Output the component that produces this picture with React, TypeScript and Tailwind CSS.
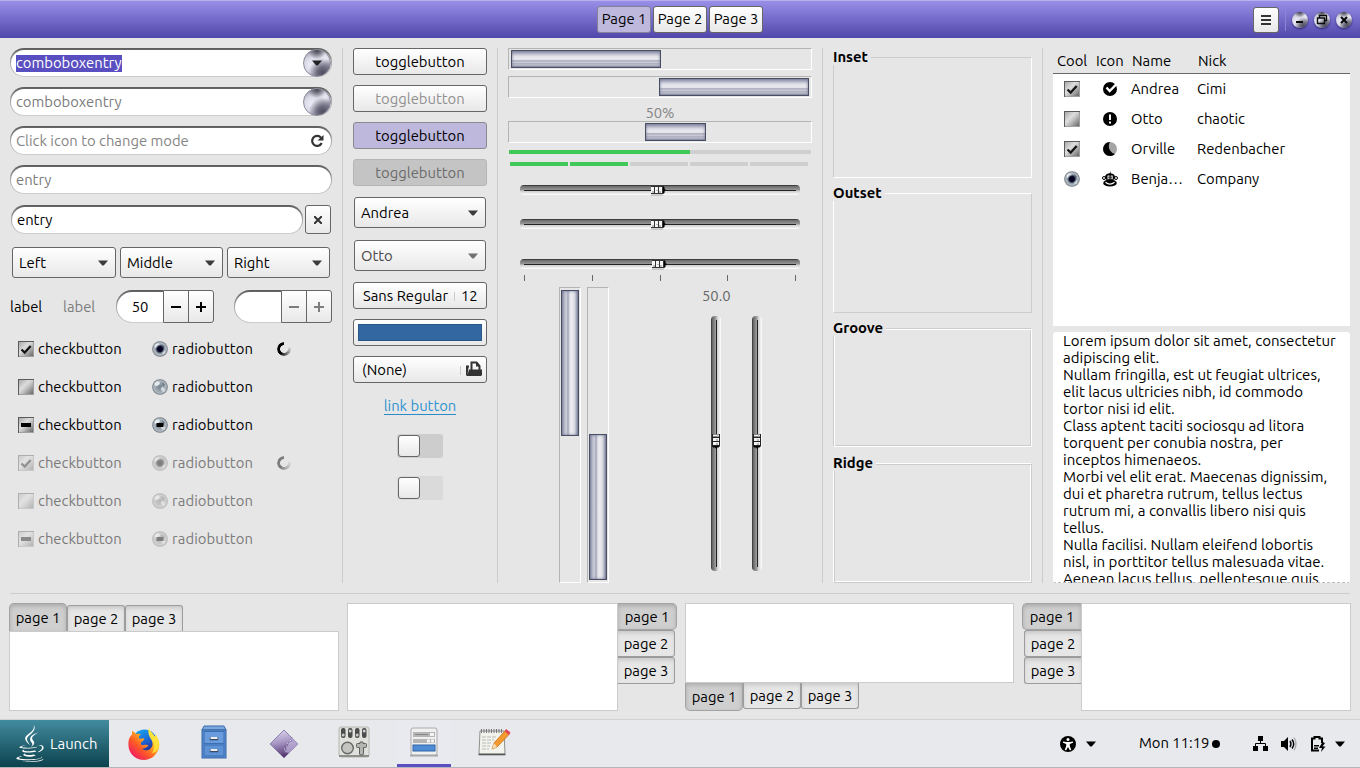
import type { ReactNode } from "react";
import { FaJava } from "react-icons/fa";

const ORB =
  "rounded-full bg-[radial-gradient(circle_at_50%_-2%,#3c3c48_0%,transparent_32%),radial-gradient(circle_at_72%_88%,#4e4e60_0%,#6a6a7c_18%,transparent_48%),radial-gradient(circle_at_82%_32%,#ececf6_0%,transparent_34%),radial-gradient(circle_at_30%_58%,#eeeef8_0%,#dcdcea_28%,transparent_60%),linear-gradient(135deg,#8e8e9e,#c2c2d0_50%,#7c7c90)]";

function Caret({ className = "" }: { className?: string }) {
  return (
    <svg className={className} width="10" height="6" viewBox="0 0 10 6">
      <path d="M0 .5h10L6 5.2Q5 6 4 5.2Z" fill="currentColor" />
    </svg>
  );
}

function Button({ className = "", children }: { className?: string; children?: ReactNode }) {
  return (
    <div
      className={`flex items-center rounded-[3px] border border-[#666] bg-linear-to-b from-white to-[#e8e8e8] ${className}`}
    >
      {children}
    </div>
  );
}

function Entry({ className = "", children }: { className?: string; children?: ReactNode }) {
  return (
    <div
      className={`flex h-[29px] rounded-[14px] bg-linear-to-b from-[#5d5d5d] via-[#a8a8a8] to-[#cecece] px-px pt-[2px] pb-px ${className}`}
    >
      <div className="flex min-w-0 flex-1 items-center justify-between rounded-[13px] bg-white pl-[5px]">{children}</div>
    </div>
  );
}

function Combo({ label, className = "", off = false }: { label: string; className?: string; off?: boolean }) {
  return (
    <Button className={`h-[31px] justify-between pr-[7px] pl-[6px] ${className}`}>
      <span className={`pt-px ${off ? "text-[#484848]" : ""}`}>{label}</span>
      <Caret className={off ? "text-[#707070]" : "text-[#3c3c3c]"} />
    </Button>
  );
}

type State = "on" | "off" | "mixed";

function Check({ state, off = false }: { state: State; off?: boolean }) {
  return (
    <svg width="16" height="16" viewBox="0 0 16 16" className={`shrink-0 ${off ? "opacity-40" : ""}`}>
      <defs>
        <linearGradient id="chk" x1="0" y1="0" x2="1" y2="1">
          <stop offset="0" stopColor="#a8a8a8" />
          <stop offset=".4" stopColor="#dedede" />
          <stop offset=".6" stopColor="#bcbcbc" />
          <stop offset="1" stopColor="#666" />
        </linearGradient>
      </defs>
      <rect width="16" height="16" fill="#a0a0a0" />
      <path d="M0 0h16v1H1v15H0z" fill="#5b5b5b" />
      <rect x="1" y="1" width="14" height="14" fill="url(#chk)" />
      {state === "on" && <path d="M3.500 8.500l3.200 3 6-6.500" fill="none" stroke="#161616" strokeWidth="2.300" />}
      {state === "mixed" && <rect x="3" y="6" width="10" height="4" fill="#000" />}
    </svg>
  );
}

function Radio({ state, off = false }: { state: State; off?: boolean }) {
  return (
    <svg width="16" height="16" viewBox="0 0 16 16" className={`shrink-0 ${off ? "opacity-45 grayscale" : ""}`}>
      <defs>
        <radialGradient id="rad" cx=".5" cy=".5" r=".5">
          <stop offset="0" stopColor="#76818d" />
          <stop offset=".45" stopColor="#929ea9" />
          <stop offset=".8" stopColor="#b0b9c0" />
          <stop offset="1" stopColor="#636b73" />
        </radialGradient>
        <radialGradient id="pupil">
          <stop offset="0" stopColor="#00000c" />
          <stop offset=".55" stopColor="#0b0b2e" />
          <stop offset="1" stopColor="#4a5666" stopOpacity="0" />
        </radialGradient>
        <filter id="soft"><feGaussianBlur stdDeviation=".7" /></filter>
      </defs>
      <circle cx="8" cy="8" r="7.800" fill="url(#rad)" />
      <g filter="url(#soft)">
        <ellipse cx="5.200" cy="4.600" rx="2.800" ry="2" fill="#e6ebef" transform="rotate(-30 5.200 4.600)" />
        <ellipse cx="11" cy="10.500" rx="1.800" ry="2.600" fill="#d2d9de" transform="rotate(-40 11 10.500)" />
        <path d="M10 3l3 2.500-2 2z" fill="#6b7886" />
      </g>
      {state === "on" && <circle cx="8" cy="8" r="5" fill="url(#pupil)" />}
      {state === "mixed" && <rect x="4.500" y="6" width="7" height="4" rx=".6" fill="#000" />}
    </svg>
  );
}

function Spinner({ off = false }: { off?: boolean }) {
  return (
    <div
      className={`size-[14px] rounded-full bg-[conic-gradient(transparent_0deg,transparent_65deg,#ccc_85deg,#777_150deg,#000_220deg,#000_360deg)] mask-[radial-gradient(circle,transparent_3.6px,black_4.2px)] ${off ? "opacity-45" : ""}`}
    />
  );
}

function ChoiceRow({ state, off = false, spin = false }: { state: State; off?: boolean; spin?: boolean }) {
  return (
    <div className={`flex h-[38px] items-center pl-2 ${off ? "text-[#7b7b7b]" : ""}`}>
      <div className="flex w-[134px] items-center gap-1">
        <Check state={state} off={off} />
        <span>checkbutton</span>
      </div>
      <div className="flex w-[125px] items-center gap-1">
        <Radio state={state} off={off} />
        <span className="tracking-[0.1px]">radiobutton</span>
      </div>
      {spin && <Spinner off={off} />}
    </div>
  );
}

function Spin({ value, off = false }: { value: string; off?: boolean }) {
  return (
    <div className={`flex h-[33px] w-[98px] ${off ? "text-[#7d7d7d]" : ""}`}>
      <div className="flex w-[47px] rounded-l-[16px] bg-linear-to-b from-[#5d5d5d] via-[#a8a8a8] to-[#cecece] pt-[2px] pb-px pl-px">
        <div className="flex flex-1 items-center justify-center rounded-l-[15px] bg-white">{value}</div>
      </div>
      <div className="flex w-[51px] rounded-r-[3px] border border-[#666] bg-linear-to-b from-white to-[#e8e8e8]">
        <div className="flex w-[25px] items-center justify-center border-r border-[#666]">
          <div className="h-[2px] w-[10px] bg-current" />
        </div>
        <div className="flex flex-1 items-center justify-center">
          <svg width="10" height="10"><path d="M0 5h10M5 0v10" stroke="currentColor" strokeWidth="2" /></svg>
        </div>
      </div>
    </div>
  );
}

const THUMB = "border border-[#4a4e62] shadow-[inset_0_0_3px_#70748e]";
const THUMB_H = `${THUMB} bg-[linear-gradient(180deg,#8f92ab_0%,#b9bacb_18%,#e0e0e8_32%,#e9e9ee_50%,#dedee8_55%,#aeb0c1_60%,#bfc1cf_70%,#cfd0da_73%,#abadbf_79%,#c3c5d1_88%,#8f92aa_100%)]`;
const THUMB_V = `${THUMB} bg-[linear-gradient(90deg,#9094ab_0%,#bfc1cf_18%,#c9cad8_28%,#a9abbe_36%,#b5b6c8_42%,#e0e0e8_48%,#ececf1_58%,#dfdfe6_75%,#b6b8c8_88%,#8083a0_100%)]`;
const WELL = "flex shrink-0 border border-t-[#b4b4b4] border-l-[#b4b4b4] border-r-white border-b-white";

function Trough({ vertical = false, shift = 0 }: { vertical?: boolean; shift?: number }) {
  return (
    <svg
      width={vertical ? 12 : 280}
      height={vertical ? 255 : 12}
      viewBox={vertical ? "0 0 12 255" : "0 0 280 12"}
      className="block shrink-0"
    >
      <defs>
        <linearGradient id="gh" x1="0" y1="0" x2="0" y2="1">
          <stop offset="0" stopColor="#1d1d1d" />
          <stop offset=".12" stopColor="#6c6c6c" />
          <stop offset=".5" stopColor="#999" />
          <stop offset=".62" stopColor="#d0d0d0" />
          <stop offset=".88" stopColor="#efefef" />
          <stop offset="1" stopColor="#fff" />
        </linearGradient>
        <linearGradient id="gv" x1="0" y1="0" x2="1" y2="0">
          <stop offset="0" stopColor="#2d2d2d" />
          <stop offset=".12" stopColor="#656565" />
          <stop offset=".5" stopColor="#a3a3a3" />
          <stop offset=".62" stopColor="#d0d0d0" />
          <stop offset="1" stopColor="#fff" />
        </linearGradient>
      </defs>
      {vertical ? (
        <>
          <rect width="10" height="255" rx="4" fill="url(#gv)" />
          <path d="M5.500 4v247" stroke="#222" />
          <g transform="translate(1 118)">
            <rect width="8" height="12" fill="#222" />
            <path d="M1 .5h6v2H1zM1 4h6v3H1zM1 8h6v3H1z" fill="#f2f2f2" />
            <path d="M5 .5h1v2H5zM4 5h2v2H4zM4 9h2v2H4z" fill="#bbb" />
            <path d="M0 12h8L6.500 13.500H5L4 15l-1-1.500H1z" fill="#000" />
          </g>
        </>
      ) : (
        <>
          <rect width="280" height="10" rx="4" fill="url(#gh)" />
          <path d="M4 5.500h272" stroke="#222" />
          <g transform={`translate(${131 + shift} 1)`}>
            <rect width="12" height="8" fill="#333" />
            <path d="M0 1h3v6H0zM4 1h3v6H4zM8 1h3v6H8z" fill="#f5f5f5" />
            <path d="M1 5h2v2H1zM5 4h2v1H5zM8 5h2v2H8z" fill="#bbb" />
            <path d="M12 0l1.500 1v2L15 4l-1.500 1.500V7L12 8z" fill="#000" />
            <path d="M0 9h12" stroke="#aaa" />
          </g>
        </>
      )}
    </svg>
  );
}

function Frame({ title, className }: { title: string; className: string }) {
  return (
    <div className={`flex shrink-0 items-start ${className}`}>
      <span className="-mt-[9px] -ml-px bg-[#e6e6e6] pr-[3px] leading-4 font-bold">{title}</span>
    </div>
  );
}

const TAB_ON = "border-[#a3a3a3] bg-[#cfcfcf] shadow-[inset_0_2px_4px_#aaa]";
const TAB_OFF = "border-[#9c9c9c] bg-[#e6e6e6] shadow-[inset_0_3px_4px_-1px_#c6c6c6]";

function Tab({ n, className }: { n: number; className: string }) {
  return (
    <div className={`flex items-center justify-center pt-px whitespace-nowrap ${n === 1 ? TAB_ON : TAB_OFF} ${className}`}>
      page {n}
    </div>
  );
}

const PAGE = "border border-[#cbcbcb] bg-white";

const LOREM = [
  "Lorem ipsum dolor sit amet, consectetur",
  "adipiscing elit.",
  "Nullam fringilla, est ut feugiat ultrices,",
  "elit lacus ultricies nibh, id commodo",
  "tortor nisi id elit.",
  "Class aptent taciti sociosqu ad litora",
  "torquent per conubia nostra, per",
  "inceptos himenaeos.",
  "Morbi vel elit erat. Maecenas dignissim,",
  "dui et pharetra rutrum, tellus lectus",
  "rutrum mi, a convallis libero nisi quis",
  "tellus.",
  "Nulla facilisi. Nullam eleifend lobortis",
  "nisl, in porttitor tellus malesuada vitae.",
  "Aenean lacus tellus, pellentesque quis",
];

function RowIcon({ kind }: { kind: string }) {
  return (
    <svg width="16" height="16" viewBox="0 0 16 16">
      {kind === "check" && (
        <>
          <circle cx="8" cy="8" r="7" fill="#000" />
          <path d="M4.500 6.500l3.200 3.500L16 1.500" fill="none" stroke="#fff" strokeWidth="2.400" />
        </>
      )}
      {kind === "alert" && (
        <>
          <circle cx="8" cy="8" r="7" fill="#000" />
          <path d="M7 3.500h2v5.500H7zM7 10.500h2v2H7z" fill="#fff" />
        </>
      )}
      {kind === "moon" && (
        <>
          <circle cx="8" cy="8" r="7" fill="#a5a5a5" />
          <path d="M8 1a7 7 0 1 0 5 12C8 11.500 5 6 8 1z" fill="#000" />
        </>
      )}
      {kind === "monkey" && (
        <>
          <path d="M9 0L7.500 2.200C4.500 2.500 3 4 3 6.300c0 1 .4 1.800 1 2.400h8c.600-.600 1-1.400 1-2.400 0-2.300-1.500-3.800-4.500-4.100L8.600 1.600z" fill="#000" />
          <circle cx="2" cy="7" r="1.500" fill="none" stroke="#000" />
          <circle cx="14" cy="7" r="1.500" fill="none" stroke="#000" />
          <path d="M5.500 4.500h2v3.500h-2zM8.700 4.500h2v3.500h-2z" fill="#fff" />
          <path d="M6.500 5.500h1v2h-1zM8.700 5.500h1v2h-1z" fill="#000" />
          <ellipse cx="8" cy="12" rx="6.800" ry="3.600" fill="#000" />
          <path d="M3.500 11.300q4.500 3.500 9 0" fill="none" stroke="#fff" strokeWidth="1.200" />
        </>
      )}
    </svg>
  );
}

function WindowOrb({ children }: { children: ReactNode }) {
  return (
    <div className={`flex size-[16px] items-center justify-center shadow-[0_1px_2px_#2d2670] ${ORB}`}>
      <svg width="16" height="16" viewBox="0 0 16 16" fill="none" stroke="#0a0a0a">{children}</svg>
    </div>
  );
}

function Firefox() {
  return (
    <svg width="34" height="34" viewBox="0 0 34 34">
      <defs>
        <linearGradient id="fx" x1=".85" y1=".1" x2=".15" y2=".9">
          <stop offset="0" stopColor="#fff14a" />
          <stop offset=".35" stopColor="#ffb21e" />
          <stop offset=".65" stopColor="#ff5a26" />
          <stop offset="1" stopColor="#ee1b63" />
        </linearGradient>
        <linearGradient id="fxb" x1="0" y1="0" x2=".5" y2="1">
          <stop offset="0" stopColor="#18b4f5" />
          <stop offset=".6" stopColor="#1b62d4" />
          <stop offset="1" stopColor="#2b2a86" />
        </linearGradient>
      </defs>
      <circle cx="17.500" cy="15" r="12.500" fill="url(#fxb)" />
      <path d="M22 1c1 4 4 5 6 9l1-2c3 4 4 9 3 13-2 7-8 12-15 12C9 33 2 27 1.500 19 1 14 2 10 5 7.500L5 4c2 .5 3 2 4 3 2-.5 4-.3 5 .5-2 1-2.500 2.500-2 4h5c1 1-1 2.500-3 4-.5 2 .5 3 3 2.500 2-.5 4 0 4.500 1-2 .5-3 3-6.500 2.500 4 4 10 1 10.500-4C26 11 20 9 22 1z" fill="url(#fx)" />
      <path d="M22 1c1 4 4 5 6 9l1-2c2.500 4 3.500 8 2.500 12-1 3.500-4 6-6.500 6 3-4 3-9 0-12.500C22.500 10 20.500 7 22 1z" fill="#ffe63c" opacity=".85" />
    </svg>
  );
}

function Drawer() {
  return (
    <svg width="26" height="34" viewBox="0 0 26 34">
      <path d="M3 1h20l2 4H1z" fill="#7ba7dc" stroke="#3b6cab" />
      <rect x="1" y="5" width="24" height="28" fill="#5a90d6" stroke="#3667a5" />
      <rect x="3" y="6.500" width="20" height="12" fill="#6a9cdd" stroke="#3c6fb0" />
      <rect x="3" y="20" width="20" height="11" fill="#5d92d6" stroke="#3c6fb0" />
      <path d="M9.500 12v2.500h7V12M9.500 24v2.500h7V24" fill="none" stroke="#334a66" strokeWidth="1.400" />
      <path d="M9.500 12h7v2h-7zM9.500 24h7v2h-7z" fill="#eee" />
    </svg>
  );
}

function Diamond() {
  return (
    <svg width="30" height="30" viewBox="0 0 30 30">
      <defs>
        <linearGradient id="dm" x1="0" y1="0" x2=".2" y2="1">
          <stop offset="0" stopColor="#e4dcf2" />
          <stop offset=".5" stopColor="#a796c4" />
          <stop offset="1" stopColor="#563470" />
        </linearGradient>
      </defs>
      <path d="M15 1l14 14-14 14L1 15z" fill="url(#dm)" stroke="#8d80a8" />
      <path d="M24 10l5 5-9 9-5-1 0-4 4-2 1-4 2-1z" fill="#c0b4dc" opacity=".7" />
      <path d="M24 9l-2 1 0 3-3 1-1 2-2 1 1 3-2 3-3 0-1 2" fill="none" stroke="#6f5c90" />
      <path d="M23.500 9.500l-2 1 0 3-3 1-1 2" fill="none" stroke="#ddd4ee" strokeDasharray="1.500 1" />
    </svg>
  );
}

function Tweaks() {
  return (
    <svg width="32" height="32" viewBox="0 0 32 32">
      <rect x="1" y="1" width="30" height="30" rx="2" fill="#e0e1dc" stroke="#b5b6b1" />
      <path d="M1 30h30" stroke="#8e8f8b" strokeWidth="2" />
      {[3, 10, 17, 24].map((x, i) => (
        <g key={x}>
          <rect x={x} y="2" width="4.500" height="10" rx="2" fill="#4a4d4b" />
          <circle cx={x + 2.2} cy={i % 2 ? 5 : 9} r="1.500" fill="#ccc" />
        </g>
      ))}
      <circle cx="9.500" cy="22" r="5.800" fill="#c4c5c1" stroke="#666965" strokeWidth="1.400" />
      <path d="M18.500 18.500q0-1 1-1H22v-1.500h3v1.500h2.500q1 0 1 1v2q0 1-1 1h-2V28q0 1-2 1t-2-1v-6.500h-2q-1 0-1-1z" fill="#b4b6b2" stroke="#5d605d" />
    </svg>
  );
}

function WidgetApp() {
  return (
    <svg width="30" height="30" viewBox="0 0 30 30">
      <path d="M1 28.500h28" stroke="#777" strokeWidth="2" opacity=".6" />
      <rect x="2" y="1" width="26" height="27" rx="2" fill="#f0f0f0" stroke="#a9a9a9" />
      <rect x="4" y="5" width="22" height="5" fill="#b5b5b5" />
      <rect x="6" y="7" width="13" height="1" fill="#888" />
      <path d="M21 6h4v3h-4z" fill="#f4f4f4" />
      <rect x="4" y="12" width="22" height="4" fill="#b5b5b5" />
      <path d="M18 12.500h3v3h-3zM22 12.500h3v3h-3z" fill="#f4f4f4" />
      <rect x="4" y="18" width="22" height="6" fill="#4f8cd6" stroke="#2d62a8" />
    </svg>
  );
}

function Notepad() {
  return (
    <svg width="34" height="30" viewBox="0 0 34 30">
      <path d="M3 4h24l1 23H2z" fill="#f3f3ee" stroke="#8f908c" />
      <path d="M1.500 27.500h27" stroke="#555" strokeWidth="1.600" />
      <path d="M4 4h22" stroke="#777" strokeWidth="4" strokeDasharray="1 1.500" />
      <path d="M5 10h14M5 13h12M5 16h9M5 19h8M5 22h7" stroke="#b9b9b5" strokeDasharray="4 1" />
      <path d="M15 22l2-6L28 4l4 3.500L20 20z" fill="#f59a2e" stroke="#c46d12" strokeWidth=".8" />
      <path d="M17 16l3 4-5 2z" fill="#f5dfb5" />
      <path d="M28 4l1-1.500 4 3L32 7.500z" fill="#e3485a" stroke="#e3485a" />
    </svg>
  );
}

export default function App() {
  return (
    <div className="flex h-[768px] w-[1360px] flex-col overflow-hidden bg-[#e6e6e6] font-['Ubuntu','Noto_Sans',sans-serif] text-[14.8px] leading-none whitespace-nowrap text-black">
      <header className="grid h-[38px] shrink-0 grid-cols-[1fr_auto_1fr] items-center border-t border-[#b8b0ec] bg-linear-to-b from-[#998fe8] to-[#5146aa]">
        <div />
        <div className="flex gap-[2px]">
          <div className="flex h-[27px] w-[54px] items-center justify-center rounded-[3px] border border-[#85829c] bg-[#bdb8dc]">Page 1</div>
          <Button className="h-[27px] w-[54px] justify-center">Page 2</Button>
          <Button className="h-[27px] w-[54px] justify-center">Page 3</Button>
        </div>
        <div className="flex items-center justify-end pr-[8px]">
          <Button className="size-[26px] justify-center">
            <svg width="10" height="10"><path d="M0 1h10M0 5h10M0 9h10" stroke="#333" strokeWidth="2" /></svg>
          </Button>
          <div className="mr-[6px] ml-[6px] h-[22px] w-px bg-[#8d84d6]" />
          <div className="flex gap-[6px]">
            <WindowOrb><path d="M4 10h7" strokeWidth="2" /></WindowOrb>
            <WindowOrb><path d="M5.500 6V3.500h7v5H11M3.500 6h7v5.500h-7z" strokeWidth="1.400" /></WindowOrb>
            <WindowOrb><path d="M5 5l6 6M11 5l-6 6" strokeWidth="2" /></WindowOrb>
          </div>
        </div>
      </header>

      <main className="flex h-[545px] shrink-0 gap-[10px] px-[10px] pt-[10px]">
        <section className="flex w-[322px] flex-col">
          <div className="flex flex-col gap-[10px]">
            <Entry>
              <span className="bg-[#5a4fc0] pb-[2px] leading-[15px] text-white">comboboxentry</span>
              <div className={`flex size-[28px] items-center justify-center border border-[#8c8c9c] ${ORB}`}>
                <Caret className="text-[#222]" />
              </div>
            </Entry>
            <Entry className="text-[#7b7b7b]">
              comboboxentry
              <div className={`size-[28px] border border-[#8c8c9c] ${ORB}`} />
            </Entry>
            <Entry className="text-[#858585]">
              Click icon to change mode
              <svg className="mr-[7px]" width="14" height="14" viewBox="0 0 14 14">
                <path d="M11 3.700A5 5 0 1 0 11.700 9" fill="none" stroke="#333" strokeWidth="2.200" />
                <path d="M13.500 1v5.500H7.500z" fill="#333" />
              </svg>
            </Entry>
            <Entry className="text-[#7b7b7b]">entry</Entry>
          </div>
          <div className="mt-[11px] flex gap-[2px] pl-px">
            <Entry className="w-[292px]">entry</Entry>
            <Button className="h-[29px] w-[26px] justify-center">
              <svg width="8" height="8"><path d="M0 0l8 8M8 0L0 8" stroke="#333" strokeWidth="2" /></svg>
            </Button>
          </div>
          <div className="mt-[13px] flex gap-[4px] pl-[2px]">
            <Combo label="Left" className="w-[104px]" />
            <Combo label="Middle" className="w-[103px]" />
            <Combo label="Right" className="w-[103px]" />
          </div>
          <div className="mt-[12px] flex items-center">
            <span className="w-[53px] pt-px">label</span>
            <span className="w-[53px] pt-px text-[#7b7b7b]">label</span>
            <Spin value="50" />
            <div className="w-[20px]" />
            <Spin value="" off />
          </div>
          <div className="mt-[7px] flex flex-col">
            <ChoiceRow state="on" spin />
            <ChoiceRow state="off" />
            <ChoiceRow state="mixed" />
            <ChoiceRow state="on" off spin />
            <ChoiceRow state="off" off />
            <ChoiceRow state="mixed" off />
          </div>
        </section>
        <div className="w-px bg-[#cccccc]" />

        <section className="flex w-[134px] flex-col items-center">
          <div className="flex w-full flex-col gap-[10px]">
            <Button className="h-[27px] justify-center pt-px">togglebutton</Button>
            <Button className="h-[27px] justify-center pt-px text-[#909090]">togglebutton</Button>
            <div className="flex h-[27px] items-center justify-center rounded-[3px] border border-[#8a8a90] bg-[#bdb8dc] pt-px">togglebutton</div>
            <div className="flex h-[27px] items-center justify-center rounded-[3px] border border-[#b5b5b5] bg-[#c4c4c4] pt-px text-[#6b6b6b]">togglebutton</div>
          </div>
          <Combo label="Andrea" className="mt-[11px] w-[132px]" />
          <Combo label="Otto" off className="mt-[12px] w-[132px]" />
          <Button className="mt-[11px] h-[27px] w-full pt-px pl-[9px]">
            <span className="w-[91px]">Sans Regular</span>
            <div className="h-[9px] w-px bg-[#ccc]" />
            <span className="ml-[6px]">12</span>
          </Button>
          <Button className="mt-[10px] h-[27px] w-full justify-center">
            <div className="h-[17px] w-[124px] border border-[#29578a] bg-[#3267a1]" />
          </Button>
          <Button className="mt-[10px] h-[27px] w-full pt-px pl-[8px]">
            <span className="w-[98px]">(None)</span>
            <div className="h-[9px] w-px bg-[#ccc]" />
            <svg className="mt-[-3px] ml-[5px]" width="16" height="16" viewBox="0 0 16 16">
              <path d="M5.500 9V1.500h5L13.500 5v4" fill="none" stroke="#333" strokeWidth="2" />
              <path d="M0 4.500h3v2H2.500L1.500 14 3 8.500h13V14l-1 1H1l-1-1z" fill="#333" />
              <path d="M10 1h1l3 3.500v1h-4z" fill="#333" />
            </svg>
          </Button>
          <div className="mt-[15px] flex h-[17px] items-center border-b border-[#2a8bc8] pt-px text-[#2f93d0]">link button</div>
          <div className="mt-[19px] flex h-[24px] w-[46px] items-center rounded-[3px] bg-[#cdcdcd] pl-px">
            <Button className="h-[22px] w-[22px]" />
          </div>
          <div className="mt-[18px] flex h-[24px] w-[46px] items-center rounded-[3px] bg-[#dadada] pl-px">
            <Button className="h-[22px] w-[22px]" />
          </div>
        </section>
        <div className="w-px bg-[#cccccc]" />

        <section className="flex w-[304px] flex-col">
          <div className={`h-[22px] pt-px pl-[2px] ${WELL}`}><div className={`h-[18px] w-[150px] ${THUMB_H}`} /></div>
          <div className={`mt-[6px] h-[22px] justify-end pt-px pr-[2px] ${WELL}`}><div className={`h-[18px] w-[150px] ${THUMB_H}`} /></div>
          <div className="flex h-[23px] shrink-0 items-center justify-center pt-[7px] text-[#858585]">50%</div>
          <div className={`h-[22px] pt-px pl-[136px] ${WELL}`}><div className={`h-[18px] w-[61px] ${THUMB_H}`} /></div>
          <div className="mt-[7px] ml-px flex h-[4px] w-[302px] shrink-0 bg-[#cfcfcf]"><div className="w-[181px] bg-[#40c958]" /></div>
          <div className="mt-[8px] ml-[2px] flex h-[4px] shrink-0 gap-[2px]">
            <div className="w-[58px] bg-[#40c958]" />
            <div className="w-[58px] bg-[#40c958]" />
            <div className="w-[58px] bg-[#cfcfcf]" />
            <div className="w-[58px] bg-[#cfcfcf]" />
            <div className="w-[58px] bg-[#cfcfcf]" />
          </div>
          <div className="mt-[19px] flex shrink-0 flex-col pl-[12px]">
            <Trough />
            <div className="h-[22px]" />
            <Trough />
            <div className="h-[28px]" />
            <Trough shift={1} />
          </div>
          <div className="mt-[4px] ml-[16px] flex h-[6px] w-[272px] shrink-0 justify-between">
            {[0, 1, 2, 3, 4].map((i) => <div key={i} className="w-px bg-[#666]" />)}
          </div>
          <div className="mt-[6px] flex pl-[51px]">
            <div className={`h-[296px] w-[22px] pt-[2px] pl-px ${WELL}`}><div className={`h-[146px] w-[18px] ${THUMB_V}`} /></div>
            <div className={`ml-[6px] h-[296px] w-[22px] items-end pb-[2px] pl-px ${WELL}`}><div className={`h-[146px] w-[18px] ${THUMB_V}`} /></div>
            <div className="ml-[93px] flex w-[70px] flex-col">
              <div className="h-[29px] pt-[2px] text-[#666]">50.0</div>
              <div className="flex gap-[29px] pl-[9px]">
                <Trough vertical />
                <Trough vertical />
              </div>
            </div>
          </div>
        </section>
        <div className="w-px bg-[#cccccc]" />

        <section className="flex w-[199px] flex-col pt-[9px]">
          <Frame title="Inset" className="h-[121px] border border-t-[#ccc] border-l-[#ccc] border-r-white border-b-white" />
          <Frame title="Outset" className="mt-[15px] h-[120px] border border-t-white border-l-white border-r-[#ccc] border-b-[#ccc]" />
          <Frame title="Groove" className="mt-[15px] h-[119px] border border-t-[#ccc] border-l-[#ccc] border-r-white border-b-white shadow-[inset_1px_1px_#fff,inset_-1px_-1px_#ccc]" />
          <Frame title="Ridge" className="mt-[16px] h-[120px] border border-t-white border-l-white border-r-[#ccc] border-b-[#ccc] shadow-[inset_1px_1px_#ccc,inset_-1px_-1px_#fff]" />
        </section>
        <div className="w-px bg-[#cccccc]" />

        <section className="flex w-[297px] flex-col">
          <div className="flex h-[278px] shrink-0 flex-col bg-white">
            <div className="grid h-[26px] grid-cols-[39px_36px_66px_auto] items-center border-b border-[#666] bg-[#e6e6e6] pt-px pl-[4px]">
              <span>Cool</span><span>Icon</span><span>Name</span><span>Nick</span>
            </div>
            {[
              ["on", "check", "Andrea", "Cimi"],
              ["off", "alert", "Otto", "chaotic"],
              ["on", "moon", "Orville", "Redenbacher"],
              ["radio", "monkey", "Benja…", "Company"],
            ].map(([state, icon, name, nick]) => (
              <div key={name} className="grid h-[30px] grid-cols-[38px_29px_66px_auto] items-center pl-[11px]">
                {state === "radio" ? <Radio state="on" /> : <Check state={state as State} />}
                <RowIcon kind={icon} />
                <span>{name}</span>
                <span>{nick}</span>
              </div>
            ))}
          </div>
          <div className="relative mt-[6px] h-[251px] shrink-0 overflow-hidden rounded-[3px] bg-white pl-[10px] text-[15.05px]">
            {LOREM.map((line) => <div key={line} className="h-[17px] leading-[18px]">{line}</div>)}
            <div className="absolute inset-x-0 bottom-0 border-b border-dashed border-[#bbb]" />
          </div>
        </section>
      </main>

      <div className="mx-[10px] mt-[10px] h-px shrink-0 bg-[#cccccc]" />

      <section className="mt-[9px] ml-[9px] flex h-[108px] w-[1342px] shrink-0 gap-[8px]">
        <div className="flex w-[330px] flex-col">
          <div className="flex h-[28px] items-end">
            <Tab n={1} className="h-[28px] w-[58px] rounded-t-[5px] border border-b-0" />
            <Tab n={2} className="h-[26px] w-[58px] rounded-t-[3px] border border-b-0" />
            <Tab n={3} className="h-[26px] w-[58px] rounded-t-[3px] border border-b-0" />
          </div>
          <div className={`flex-1 ${PAGE}`} />
        </div>
        <div className="flex w-[330px]">
          <div className={`w-[271px] ${PAGE}`} />
          <div className="flex flex-col items-start">
            <Tab n={1} className="h-[27px] w-[59px] rounded-r-[5px] border border-l-0" />
            <Tab n={2} className="h-[27px] w-[57px] rounded-r-[3px] border border-l-0" />
            <Tab n={3} className="h-[27px] w-[57px] rounded-r-[3px] border border-l-0" />
          </div>
        </div>
        <div className="flex w-[329px] flex-col">
          <div className={`h-[80px] ${PAGE}`} />
          <div className="flex items-start">
            <Tab n={1} className="h-[28px] w-[58px] rounded-b-[5px] border border-t-0" />
            <Tab n={2} className="h-[26px] w-[58px] rounded-b-[3px] border border-t-0" />
            <Tab n={3} className="h-[26px] w-[58px] rounded-b-[3px] border border-t-0" />
          </div>
        </div>
        <div className="flex w-[329px]">
          <div className="flex flex-col items-end">
            <Tab n={1} className="h-[27px] w-[59px] rounded-l-[5px] border border-r-0" />
            <Tab n={2} className="h-[27px] w-[57px] rounded-l-[3px] border border-r-0" />
            <Tab n={3} className="h-[27px] w-[57px] rounded-l-[3px] border border-r-0" />
          </div>
          <div className={`flex-1 ${PAGE}`} />
        </div>
      </section>

      <footer className="mt-[8px] flex h-[49px] shrink-0 border-t border-b border-t-[#d2d2d2] border-b-[#b4b4bb] bg-[#e8e9ed]">
        <div className="flex w-[109px] items-center bg-linear-to-b from-[#428ca0] to-[#0b434e] pl-[14px] text-white">
          <FaJava className="h-[37px] w-[32px] shrink-0" />
          <span className="ml-[4px] pt-px">Launch</span>
        </div>
        <div className="ml-[8px] flex">
          <div className="flex w-[54px] items-center justify-center"><Firefox /></div>
          <div className="ml-[16px] flex w-[54px] items-center justify-center pb-[4px]"><Drawer /></div>
          <div className="ml-[16px] flex w-[54px] items-center justify-center"><Diamond /></div>
          <div className="ml-[16px] flex w-[54px] items-center justify-center pb-[3px]"><Tweaks /></div>
          <div className="ml-[16px] flex w-[54px] items-center justify-center border-b-3 border-[#5a4fc0] bg-[#e9eaef]"><WidgetApp /></div>
          <div className="ml-[16px] flex w-[54px] items-center justify-center pb-[3px]"><Notepad /></div>
        </div>
        <div className="ml-auto flex items-center pr-[15px]">
          <svg width="16" height="16" viewBox="0 0 16 16">
            <circle cx="8" cy="8" r="8" fill="#000" />
            <circle cx="8" cy="3.500" r="1.500" fill="#fff" />
            <path d="M3 5.500l3.500.5h3l3.500-.5v1.300L9.800 8v2l1.500 4-1.500.3L8 11l-1.800 3.300-1.500-.3 1.500-4V8L3 6.800z" fill="#fff" />
          </svg>
          <Caret className="ml-[10px]" />
          <span className="ml-[43px] w-[69px]">Mon 11:19</span>
          <div className="ml-[4px] size-[8px] rounded-full bg-black" />
          <svg className="ml-[33px]" width="15" height="15" viewBox="0 0 15 15">
            <path d="M5 0h5v5H5zM0 10h5v5H0zM10 10h5v5h-5z" />
            <path d="M7.500 5v3M2.500 10V7.500h10V10" fill="none" stroke="#000" />
          </svg>
          <svg className="ml-[13px]" width="16" height="14" viewBox="0 0 16 14">
            <path d="M0 4h3l4-4v14l-4-4H0z" />
            <path d="M9 4q2 3 0 6M11 2.500q3.500 4.500 0 9" fill="none" stroke="#000" strokeWidth="1.500" />
            <path d="M13 .5q4 6.500 0 13" fill="none" stroke="#aaa" strokeWidth="1.300" />
          </svg>
          <svg className="ml-[14px]" width="15" height="16" viewBox="0 0 15 16">
            <path d="M8 14.500H1V2.500h2.500V1h5v1.500H11V7" fill="none" stroke="#000" strokeWidth="2" />
            <path d="M3 9h5v1.500H3zM3 11.500h4V13H3z" />
            <path d="M11.500 6L8 12h3l-1 4 4.500-5.500h-3L14 7z" />
          </svg>
          <Caret className="ml-[9px]" />
        </div>
      </footer>
    </div>
  );
}
